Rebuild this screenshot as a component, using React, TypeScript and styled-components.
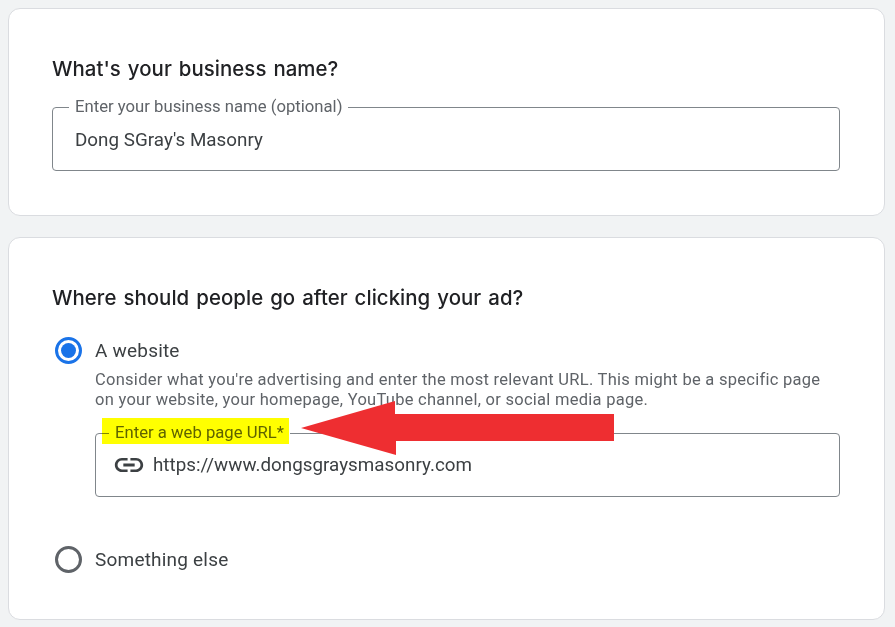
import React from "react";
import styled, { createGlobalStyle } from "styled-components";

const Global = createGlobalStyle`
  html, body { margin: 0; padding: 0; background: #f1f3f4; }
  body { font-family: Roboto, "Liberation Sans", sans-serif; width: 895px; height: 627px; overflow: hidden; }
`;

const Page = styled.main`
  display: flex;
  flex-direction: column;
  gap: 21px;
  padding: 8px 10px 0 8px;
  width: 895px;
  box-sizing: border-box;
`;

const Card = styled.section<{ $height: number }>`
  box-sizing: border-box;
  height: ${(p) => p.$height}px;
  padding: 46px 44px 0 43px;
  background: #fff;
  border: 1px solid #dadce0;
  border-radius: 12px;
`;

const Heading = styled.h2`
  margin: 0 0 14px;
  font-family: Inter, Roboto, sans-serif;
  font-size: 20.4px;
  line-height: 28px;
  font-weight: 500;
  letter-spacing: 0.05px;
  word-spacing: 1.5px;
  color: #202124;
`;

const Outline = styled.fieldset<{ $indent?: number; $inset: number }>`
  box-sizing: border-box;
  height: 74px;
  margin: 0 0 0 ${(p) => p.$indent ?? 0}px;
  padding: 0 ${(p) => p.$inset}px;
  border: 1px solid #80868b;
  border-radius: 4px;
  min-width: 0;
  display: block;
`;

const Legend = styled.legend`
  padding: 0 6px;
  margin-left: -6px;
  font-size: 16.7px;
  line-height: 20px;
  color: #5f6368;
`;

const Value = styled.div<{ $top: number }>`
  display: flex;
  align-items: center;
  gap: 9px;
  padding-top: ${(p) => p.$top}px;
  font-size: 18.8px;
  line-height: 24px;
  letter-spacing: 0.03px;
  color: #3c4043;
`;

const RadioRow = styled.div`
  display: flex;
  align-items: center;
  gap: 13px;
  padding-left: 3px;
`;

const FirstRadio = styled(RadioRow)`
  margin-top: 25px;
`;

const SecondRadio = styled(RadioRow)`
  margin-top: 49px;
`;

const RadioCircle = styled.span<{ $on?: boolean }>`
  box-sizing: border-box;
  width: 27px;
  height: 27px;
  border-radius: 50%;
  border: 3px solid ${(p) => (p.$on ? "#1a73e8" : "#5f6368")};
  display: flex;
  align-items: center;
  justify-content: center;
  &::after {
    content: "";
    display: ${(p) => (p.$on ? "block" : "none")};
    width: 15px;
    height: 15px;
    border-radius: 50%;
    background: #1a73e8;
  }
`;

const RadioLabel = styled.span`
  font-size: 19px;
  line-height: 24px;
  letter-spacing: 0.2px;
  color: #3c4043;
`;

const Description = styled.p`
  margin: 6px 0 13px 43px;
  font-size: 16.5px;
  line-height: 20px;
  letter-spacing: 0.27px;
  color: #5f6368;
`;

const LinkGlyph = styled.svg`
  flex: none;
  margin: -5px -2px -5px -3px;
  fill: #3c4043;
`;

const Highlight = styled.div`
  position: absolute;
  left: 102px;
  top: 418px;
  width: 187px;
  height: 26px;
  background: #ffff00;
  mix-blend-mode: multiply;
`;

const Arrow = styled.svg`
  position: absolute;
  left: 300px;
  top: 400px;
`;

const LinkIcon = () => (
  <LinkGlyph width="34" height="34" viewBox="0 0 24 24">
    <path d="M3.9 12c0-1.71 1.39-3.1 3.1-3.1h4V7H7c-2.76 0-5 2.24-5 5s2.24 5 5 5h4v-1.9H7c-1.71 0-3.1-1.39-3.1-3.1zM8 13h8v-2H8v2zm9-6h-4v1.9h4c1.71 0 3.1 1.39 3.1 3.1s-1.39 3.1-3.1 3.1h-4V17h4c2.76 0 5-2.24 5-5s-2.24-5-5-5z" />
  </LinkGlyph>
);

export default function App() {
  return (
    <>
      <Global />
      <Page>
        <Card $height={208}>
          <Heading>What's your business name?</Heading>
          <Outline $inset={22}>
            <Legend>Enter your business name (optional)</Legend>
            <Value $top={11}>Dong SGray's Masonry</Value>
          </Outline>
        </Card>
        <Card $height={383}>
          <Heading>Where should people go after clicking your ad?</Heading>
          <FirstRadio>
            <RadioCircle $on />
            <RadioLabel>A website</RadioLabel>
          </FirstRadio>
          <Description>
            Consider what you're advertising and enter the most relevant URL. This might be a specific page
            on your website, your homepage, YouTube channel, or social media page.
          </Description>
          <Outline $indent={43} $inset={19}>
            <Legend>Enter a web page URL*</Legend>
            <Value $top={10}>
              <LinkIcon />
              https://www.dongsgraysmasonry.com
            </Value>
          </Outline>
          <SecondRadio>
            <RadioCircle />
            <RadioLabel>Something else</RadioLabel>
          </SecondRadio>
        </Card>
      </Page>
      <Highlight />
      <Arrow width="316" height="56" viewBox="0 0 316 56">
        <polygon points="1,28 95,1 95,14 314,14 314,41 96,41 96,55" fill="#ee2e31" />
      </Arrow>
    </>
  );
}
